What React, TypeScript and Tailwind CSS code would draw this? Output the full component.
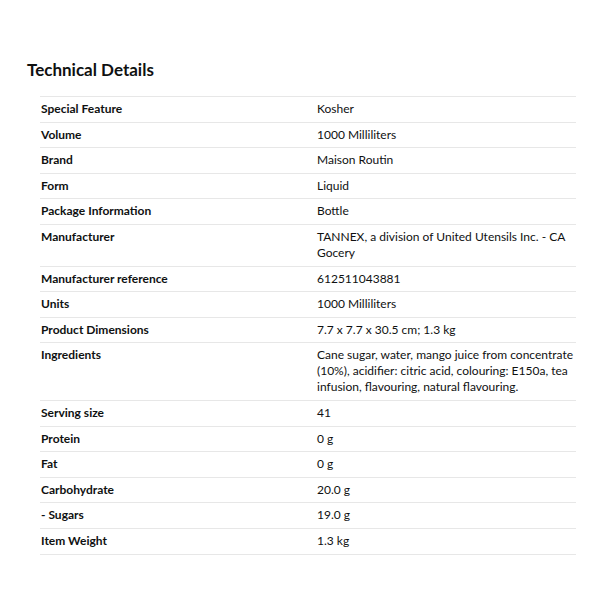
import React from "react";

const details: [string, string][] = [
  ["Special Feature", "Kosher"],
  ["Volume", "1000 Milliliters"],
  ["Brand", "Maison Routin"],
  ["Form", "Liquid"],
  ["Package Information", "Bottle"],
  ["Manufacturer", "TANNEX, a division of United Utensils Inc. - CA Gocery"],
  ["Manufacturer reference", "612511043881"],
  ["Units", "1000 Milliliters"],
  ["Product Dimensions", "7.7 x 7.7 x 30.5 cm; 1.3 kg"],
  [
    "Ingredients",
    "Cane sugar, water, mango juice from concentrate (10%), acidifier: citric acid, colouring: E150a, tea infusion, flavouring, natural flavouring.",
  ],
  ["Serving size", "41"],
  ["Protein", "0 g"],
  ["Fat", "0 g"],
  ["Carbohydrate", "20.0 g"],
  ["- Sugars", "19.0 g"],
  ["Item Weight", "1.3 kg"],
];

const App = () => {
  return (
    <div className="w-[600px] h-[600px] bg-white pt-[58px] pl-[27px] font-['Lato',sans-serif]">
      <h2 className="text-[17px] leading-[24px] font-bold text-[#0f1111]">Technical Details</h2>
      <div className="ml-[13px] mt-[14px] w-[536px] border-t border-[#e7e7e7]">
        {details.map(([label, value]) => (
          <div key={label} className="flex border-b border-[#e7e7e7] pt-[4px] pb-[4.6px] text-[12px] leading-[16px]">
            <div className="w-[277px] shrink-0 pl-[1px] font-bold text-[#0f1111]">{label}</div>
            <div className="flex-1 text-[#0f1111]">{value}</div>
          </div>
        ))}
      </div>
    </div>
  );
};

export default App;
